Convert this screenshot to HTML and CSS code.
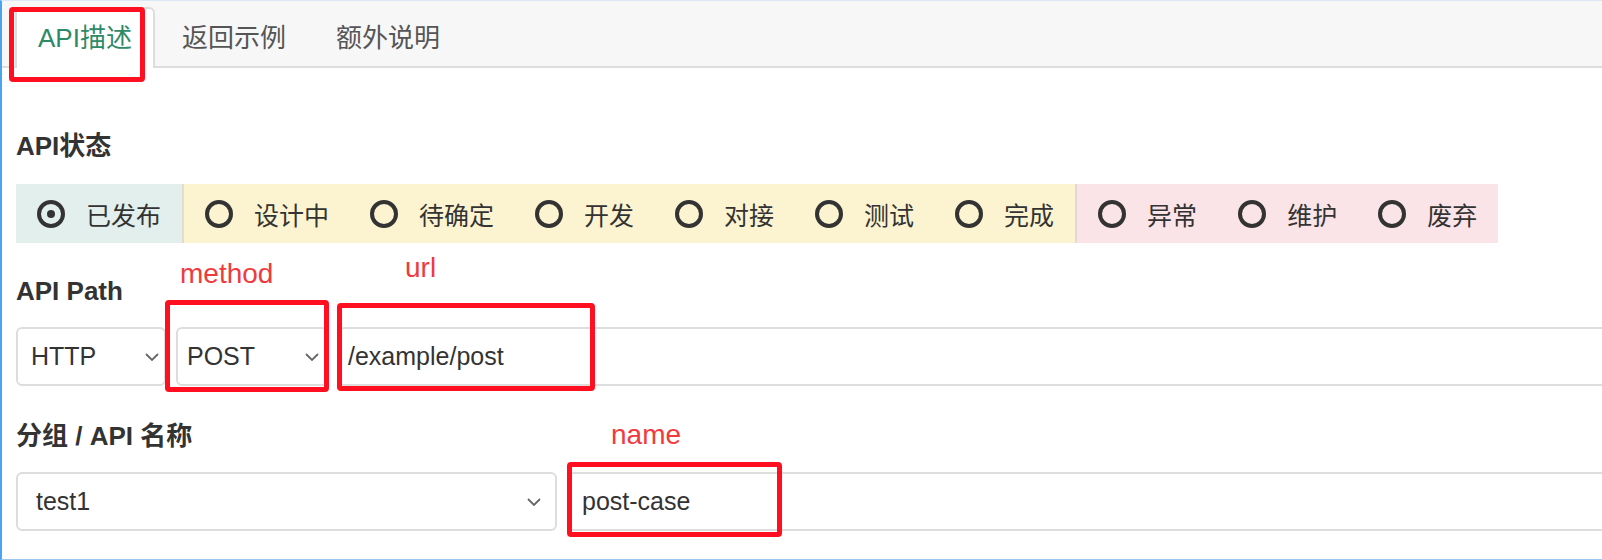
FILE: index.html
```html
<!DOCTYPE html>
<html lang="zh-CN">
<head>
<meta charset="utf-8">
<title>API描述</title>
<link rel="stylesheet" href="styles.css">
</head>
<body>
<div class="page">
  <div class="tabs">
    <div class="tab active">API描述</div>
    <div class="tab">返回示例</div>
    <div class="tab">额外说明</div>
  </div>
  <div class="content">
    <div class="group group-status">
      <div class="label">API状态</div>
      <div class="status">
        <div class="seg seg-green">
          <div class="opt"><span class="radio checked"></span><span>已发布</span></div>
        </div>
        <div class="seg seg-yellow">
          <div class="opt"><span class="radio"></span><span>设计中</span></div>
          <div class="opt"><span class="radio"></span><span>待确定</span></div>
          <div class="opt"><span class="radio"></span><span>开发</span></div>
          <div class="opt"><span class="radio"></span><span>对接</span></div>
          <div class="opt"><span class="radio"></span><span>测试</span></div>
          <div class="opt"><span class="radio"></span><span>完成</span></div>
        </div>
        <div class="seg seg-pink">
          <div class="opt"><span class="radio"></span><span>异常</span></div>
          <div class="opt"><span class="radio"></span><span>维护</span></div>
          <div class="opt"><span class="radio"></span><span>废弃</span></div>
        </div>
      </div>
    </div>
    <div class="group group-path">
      <div class="label">API Path</div>
      <div class="row row-path">
        <div class="field select sel-proto"><span>HTTP</span><svg class="chev" width="14" height="8" viewBox="0 0 14 8"><path d="M1 1 L7 7 L13 1"/></svg></div>
        <div class="field select sel-method"><span>POST</span><svg class="chev" width="14" height="8" viewBox="0 0 14 8"><path d="M1 1 L7 7 L13 1"/></svg></div>
        <div class="field input inp-url">/example/post</div>
      </div>
    </div>
    <div class="group group-name">
      <div class="label">分组 / API 名称</div>
      <div class="row row-name">
        <div class="field select sel-group"><span>test1</span><svg class="chev" width="14" height="8" viewBox="0 0 14 8"><path d="M1 1 L7 7 L13 1"/></svg></div>
        <div class="field input inp-name">post-case</div>
      </div>
    </div>
  </div>

  <div class="mark mark-tab"></div>
  <div class="mark mark-method"></div>
  <div class="mark mark-url"></div>
  <div class="mark mark-name"></div>
  <div class="note note-method">method</div>
  <div class="note note-url">url</div>
  <div class="note note-name">name</div>
</div>
</body>
</html>
```

FILE: styles.css
```css
* { box-sizing: border-box; }

html, body {
  margin: 0;
  padding: 0;
  background: #ffffff;
}

body {
  font-family: "Liberation Sans", "Noto Sans CJK SC", sans-serif;
  color: #333333;
}

.page {
  position: relative;
  width: 1602px;
  height: 560px;
  overflow: hidden;
  border-left: 2px solid #4aa3f0;
  border-top: 1px solid #dce8f5;
  border-bottom: 1px solid #9cc7ef;
}

/* Tabs */
.tabs {
  display: flex;
  align-items: flex-end;
  height: 67px;
  padding: 6px 0 0 13px;
  background: #f7f7f7;
  border-bottom: 2px solid #dddddd;
}

.tab {
  display: flex;
  align-items: center;
  height: 61px;
  margin-bottom: -2px;
  margin-right: 4px;
  padding: 0 21px 7px;
  font-size: 26px;
  color: #555555;
  border: 2px solid transparent;
  border-bottom: none;
  border-radius: 6px 6px 0 0;
}

.tab.active {
  background: #ffffff;
  border-color: #dddddd;
  color: #2e8a66;
}

/* Content */
.content {
  padding-left: 14px;
}

.group-status { margin-top: 60px; }
.group-path { margin-top: 30px; }
.group-name { margin-top: 32px; }

.label {
  font-size: 26px;
  font-weight: bold;
  line-height: 36px;
  color: #333333;
  margin-bottom: 18px;
}

.group-status .label { margin-bottom: 20px; }

.status {
  display: flex;
  height: 59px;
  width: max-content;
}

.seg {
  display: flex;
  align-items: center;
  padding: 0 21px 0 21px;
  font-size: 25px;
  color: #333333;
}

.seg-green { background: #e2efed; }
.seg-yellow { background: #fcf4d1; border-left: 2px solid #e2ddcc; }
.seg-pink { background: #fbe4e7; border-left: 2px solid #e2d8da; }

.opt {
  display: flex;
  align-items: center;
  gap: 21px;
  margin-right: 41px;
}

.opt:last-child { margin-right: 0; }

.radio {
  position: relative;
  width: 28px;
  height: 28px;
  border: 4px solid #333333;
  border-radius: 50%;
  flex: none;
}

.radio.checked::after {
  content: "";
  position: absolute;
  left: 6px;
  top: 6px;
  width: 8px;
  height: 8px;
  border-radius: 50%;
  background: #333333;
}

/* Fields */
.row {
  display: flex;
  gap: 10px;
  margin-right: -20px;
}

.field {
  display: flex;
  align-items: center;
  height: 59px;
  border: 2px solid #dddddd;
  border-radius: 6px;
  background: #ffffff;
  font-size: 25px;
  color: #333333;
  padding: 0 10px;
}

.select { justify-content: space-between; }

.chev {
  fill: none;
  stroke: #666666;
  stroke-width: 1.8;
  flex: none;
}

.sel-proto { width: 150px; padding: 0 5px 0 13px; }
.sel-method { width: 152px; padding: 0 7px 0 9px; }
.inp-url { flex: 1; padding-left: 8px; }

.sel-group { width: 541px; padding: 0 14px 0 18px; }
.inp-name { flex: 1; padding-left: 13px; }

/* Annotations (overlay) */
.mark {
  position: absolute;
  border: 5px solid #ff0f1f;
  border-radius: 4px;
}

.mark-tab { left: 7px; top: 6px; width: 136px; height: 75px; }
.mark-method { left: 163px; top: 299px; width: 164px; height: 92px; }
.mark-url { left: 335px; top: 302px; width: 258px; height: 88px; }
.mark-name { left: 565px; top: 461px; width: 215px; height: 75px; }

.note {
  position: absolute;
  font-size: 28px;
  line-height: 32px;
  color: #f03a3e;
}

.note-method { left: 178px; top: 257px; }
.note-url { left: 403px; top: 251px; }
.note-name { left: 609px; top: 418px; }
```
